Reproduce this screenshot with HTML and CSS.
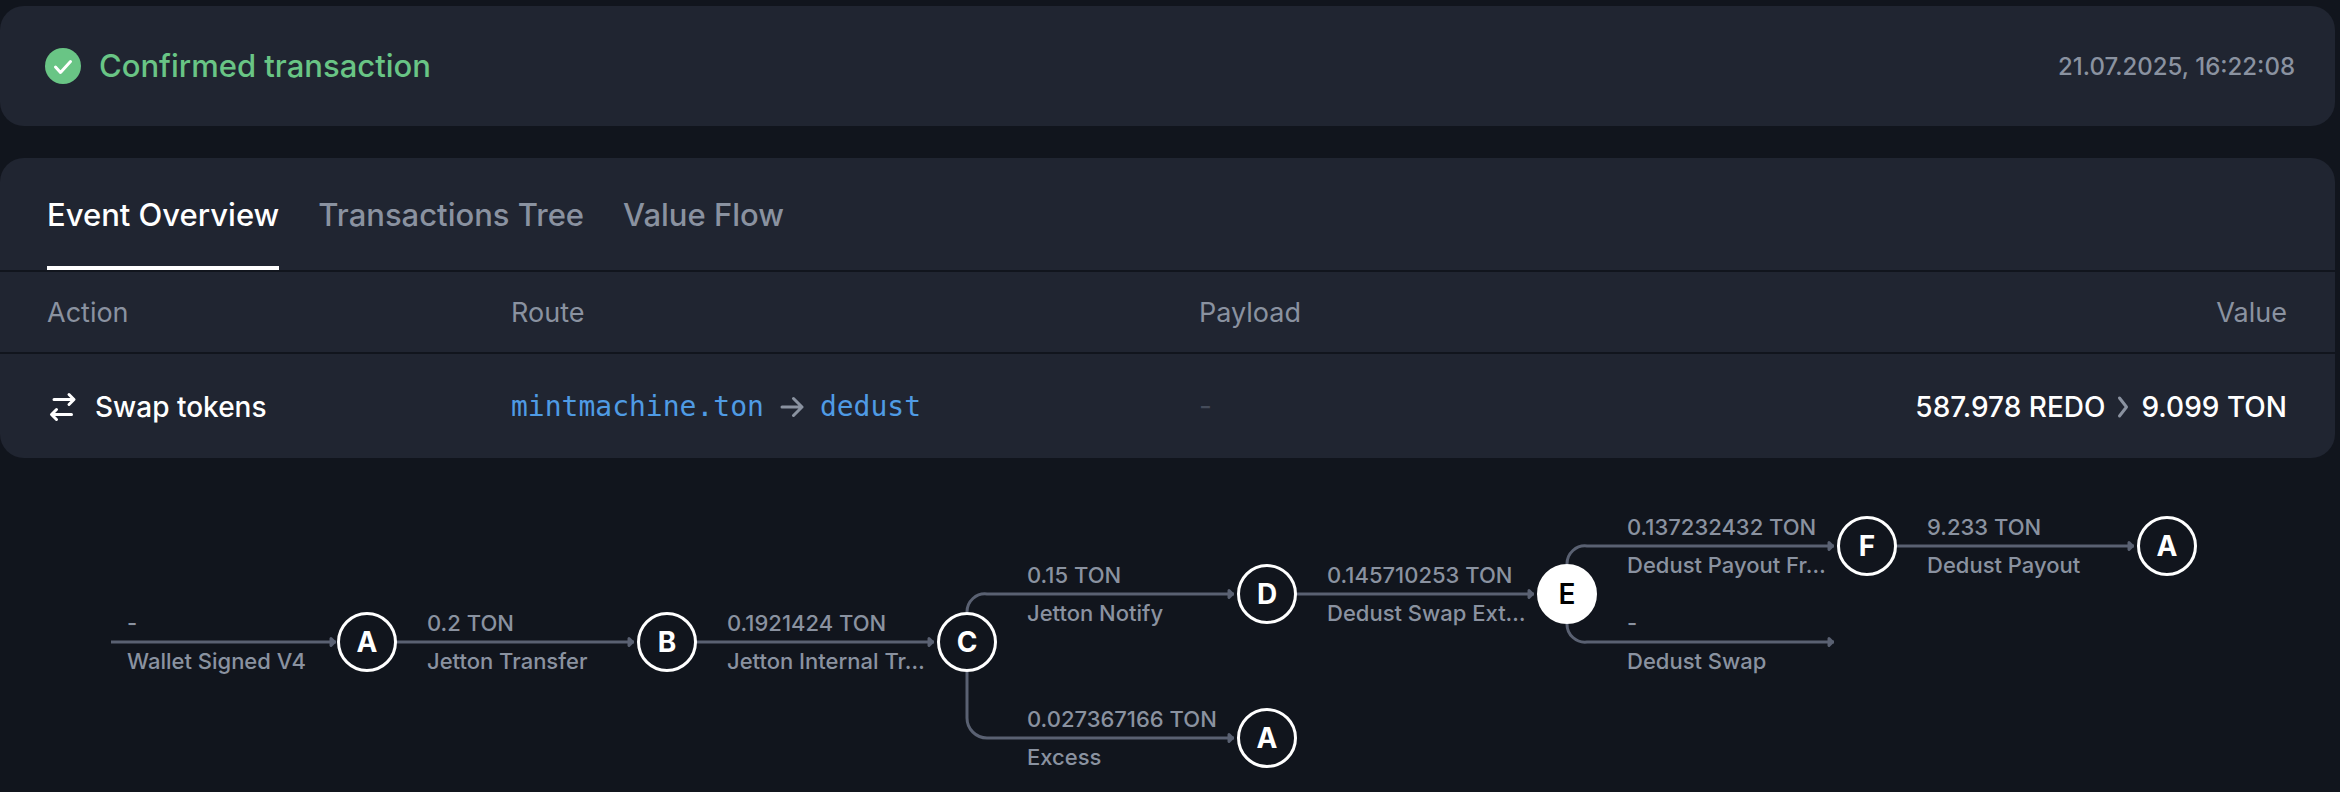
FILE: index.html
```html
<!DOCTYPE html>
<html lang="en">
<head>
<meta charset="utf-8">
<title>Confirmed transaction</title>
<link rel="stylesheet" href="styles.css">
</head>
<body>
<main class="page">
  <header class="card status">
    <svg class="status-icon" viewBox="0 0 36 36" aria-hidden="true"><circle cx="18" cy="18" r="18" fill="#69c585"/><path d="M10.500 19l5 5.500 10-11" fill="none" stroke="#fff" stroke-width="3" stroke-linecap="round" stroke-linejoin="round"/></svg>
    <h1 class="status-title">Confirmed transaction</h1>
    <time class="status-time" datetime="2025-07-21T16:22:08">21.07.2025, 16:22:08</time>
  </header>

  <section class="card overview">
    <nav class="tabs" role="tablist">
      <button class="tab tab-active" type="button" role="tab" aria-selected="true">Event Overview</button>
      <button class="tab" type="button" role="tab" aria-selected="false">Transactions Tree</button>
      <button class="tab" type="button" role="tab" aria-selected="false">Value Flow</button>
    </nav>
    <table class="events">
      <thead>
        <tr><th class="col-action">Action</th><th class="col-route">Route</th><th>Payload</th><th class="col-value">Value</th></tr>
      </thead>
      <tbody>
        <tr>
          <td><span class="line action">
            <svg class="swap-icon" viewBox="0 0 28 32" aria-hidden="true"><g fill="none" stroke="#fff" stroke-width="3" stroke-linecap="round" stroke-linejoin="round"><path d="M5 8.500h19.500M20 3.500l5 5-5 5"/><path d="M22.500 23.500H3M7.500 18.500l-5 5 5 5"/></g></svg>
            Swap tokens</span></td>
          <td><span class="line route">
            <a href="#mintmachine">mintmachine.ton</a>
            <svg class="arrow-icon" viewBox="0 0 24 24" aria-hidden="true"><path d="M2 12h20M13.500 3.500L22 12l-8.500 8.500" fill="none" stroke="#8a92a0" stroke-width="3" stroke-linecap="round" stroke-linejoin="round"/></svg>
            <a href="#dedust">dedust</a></span></td>
          <td class="empty">-</td>
          <td class="col-value"><span class="line value">587.978 REDO
            <svg class="chevron-icon" viewBox="0 0 14 24" aria-hidden="true"><path d="M3.500 3l7 9-7 9" fill="none" stroke="#8a92a0" stroke-width="3" stroke-linecap="round" stroke-linejoin="round"/></svg>
            9.099 TON</span></td>
        </tr>
      </tbody>
    </table>
  </section>

  <section class="graph" aria-label="Transaction graph">
    <svg class="edges" width="2300" height="334" aria-hidden="true">
      <defs><marker id="tip" viewBox="0 0 8 12" markerWidth="8" markerHeight="12" refX="7" refY="6" markerUnits="userSpaceOnUse"><path d="M2 2.500l3.500 3.500-3.500 3.500z" fill="#5a6172" stroke="#5a6172" stroke-width="3" stroke-linejoin="round"/></marker></defs>
      <g class="edge">
        <path d="M111 184H336"/><path d="M396 184H634"/><path d="M696 184H934"/>
        <path d="M967 154a18 18 0 0 1 20-18H1234"/>
        <path d="M967 214V260a20 20 0 0 0 20 20H1234"/>
        <path d="M1296 136H1534"/>
        <path d="M1567 106a18 18 0 0 1 20-18H1834"/>
        <path d="M1567 166a18 18 0 0 0 20 18H1834"/>
        <path d="M1896 88H2134"/>
      </g>
    </svg>
    <div class="label" style="left:127px;top:184px"><span>-</span><span>Wallet Signed V4</span></div>
    <div class="label" style="left:427px;top:184px"><span>0.2 TON</span><span>Jetton Transfer</span></div>
    <div class="label" style="left:727px;top:184px"><span>0.1921424 TON</span><span>Jetton Internal Tr…</span></div>
    <div class="label" style="left:1027px;top:136px"><span>0.15 TON</span><span>Jetton Notify</span></div>
    <div class="label" style="left:1027px;top:280px"><span>0.027367166 TON</span><span>Excess</span></div>
    <div class="label" style="left:1327px;top:136px"><span>0.145710253 TON</span><span>Dedust Swap Ext…</span></div>
    <div class="label" style="left:1627px;top:88px"><span>0.137232432 TON</span><span>Dedust Payout Fr…</span></div>
    <div class="label" style="left:1627px;top:184px"><span>-</span><span>Dedust Swap</span></div>
    <div class="label" style="left:1927px;top:88px"><span>9.233 TON</span><span>Dedust Payout</span></div>
    <button type="button" class="node" style="left:367px;top:184px">A</button>
    <button type="button" class="node" style="left:667px;top:184px">B</button>
    <button type="button" class="node" style="left:967px;top:184px">C</button>
    <button type="button" class="node" style="left:1267px;top:136px">D</button>
    <button type="button" class="node" style="left:1267px;top:280px">A</button>
    <button type="button" class="node node-active" style="left:1567px;top:136px">E</button>
    <button type="button" class="node" style="left:1867px;top:88px">F</button>
    <button type="button" class="node" style="left:2167px;top:88px">A</button>
  </section>
</main>
</body>
</html>
```

FILE: styles.css
```css
* { box-sizing: border-box; }

body {
  margin: 0;
  background: #11151d;
  color: #fff;
  font-family: Inter, "Liberation Sans", sans-serif;
}

.page {
  padding-top: 6px;
}

.card {
  margin-right: 5px;
  margin-bottom: 32px;
  border-radius: 24px;
  background: #202531;
}

.status {
  display: flex;
  align-items: center;
  padding: 40px 40px 40px 45px;
}

.status-icon {
  width: 36px;
  height: 36px;
}

.status-title {
  margin: 0 auto 0 18px;
  color: #69c585;
  font-size: 31px;
  font-weight: 500;
  line-height: 40px;
}

.status-time {
  color: #8a92a0;
  font-size: 24px;
  font-weight: 500;
}

.overview {
  margin-bottom: 0;
}

.tabs {
  display: flex;
  gap: 39px;
  padding: 0 47px;
  border-bottom: 2px solid #11151d;
}

.tab {
  padding: 37px 0 31px;
  border: 0;
  border-bottom: 4px solid transparent;
  background: none;
  color: #8a92a0;
  font: 500 31px/40px Inter, "Liberation Sans", sans-serif;
}

.tab-active {
  border-color: #fff;
  color: #fff;
}

.events {
  width: 100%;
  border-collapse: separate;
  border-spacing: 0;
  table-layout: fixed;
}

.events th,
.events td {
  padding: 0;
  text-align: left;
  font-size: 27px;
}

.events th {
  height: 82px;
  border-bottom: 2px solid #11151d;
  color: #8a92a0;
  font-weight: 400;
}

.events td {
  height: 104px;
  font-size: 28px;
  font-weight: 500;
}

.events th:first-child,
.events td:first-child {
  padding-left: 47px;
}

.events .col-value {
  padding-right: 48px;
  text-align: right;
}

.col-action { width: 511px; }
.col-route { width: 688px; }

.line {
  display: inline-flex;
  align-items: center;
  vertical-align: middle;
}

.swap-icon {
  width: 28px;
  height: 32px;
  margin: 0 18px 0 2px;
}

.route {
  gap: 16px;
  font: 400 28px/36px "DejaVu Sans Mono", monospace;
}

.route a {
  color: #4f9be4;
  text-decoration: none;
}

.arrow-icon {
  width: 24px;
  height: 24px;
}

.value {
  gap: 11px;
}

.chevron-icon {
  width: 14px;
  height: 24px;
}

.events .empty {
  color: #454c5a;
  font-weight: 400;
}

.graph {
  position: relative;
  min-height: 334px;
  overflow: hidden;
}

.edges {
  display: block;
}

.edge {
  fill: none;
  stroke: #5a6172;
  stroke-width: 3;
}

.edge path {
  marker-end: url(#tip);
}

.label {
  position: absolute;
  display: grid;
  gap: 6px;
  transform: translateY(-50%);
  color: #8a92a0;
  font-size: 22px;
  font-weight: 500;
  line-height: 32px;
}

.label span {
  white-space: nowrap;
}

.node {
  position: absolute;
  width: 60px;
  height: 60px;
  padding: 0;
  transform: translate(-50%, -50%);
  border: 3px solid #fff;
  border-radius: 50%;
  background: #11151d;
  color: #fff;
  font: 700 28px/1 Inter, "Liberation Sans", sans-serif;
}

.node-active {
  background: #fff;
  color: #000;
  font-weight: 600;
}
```
